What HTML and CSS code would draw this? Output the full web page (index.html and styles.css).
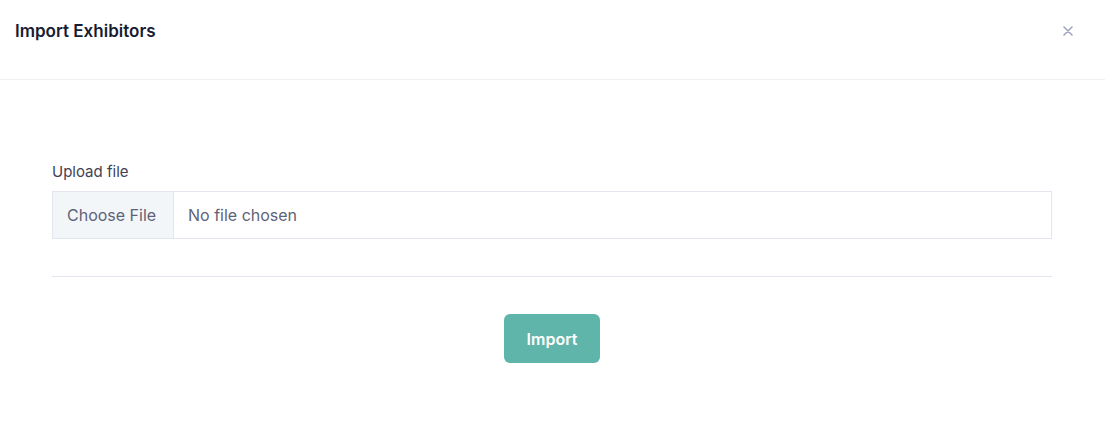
FILE: index.html
```html
<!DOCTYPE html>
<html>
<head>
<meta charset="utf-8">
<link rel="stylesheet" href="styles.css">
</head>
<body>
<div class="modal">
  <div class="modal-header">
    <h5 class="modal-title">Import Exhibitors</h5>
    <button class="close" type="button" aria-label="Close">
      <svg width="10" height="10" viewBox="0 0 10 10"><path d="M1 1L9 9M9 1L1 9" stroke="#a1a5c0" stroke-width="1.6" stroke-linecap="round"/></svg>
    </button>
  </div>
  <div class="modal-body">
    <label class="form-label">Upload file</label>
    <div class="file-input">
      <span class="file-btn">Choose File</span>
      <span class="file-name">No file chosen</span>
    </div>
    <hr class="divider">
    <div class="actions">
      <button class="btn-import" type="button">Import</button>
    </div>
  </div>
</div>
</body>
</html>
```
FILE: styles.css
```css
* { box-sizing: border-box; }
html, body { margin: 0; padding: 0; background: #fff; }
body { font-family: Inter, "Noto Sans", sans-serif; color: #181c32; }
.modal { width: 1105px; }
.modal-header {
  height: 80px;
  display: flex;
  align-items: center;
  justify-content: space-between;
  padding: 0 32px 17px 15px;
  border-bottom: 1px solid #eff2f5;
}
.modal-title { margin: 0; font-size: 17px; font-weight: 600; color: #181c32; }
.close { border: 0; background: transparent; padding: 0; display: flex; cursor: pointer; }
.modal-body { padding: 83px 53px 0 52px; }
.form-label { display: block; font-size: 15px; font-weight: 400; color: #3f4254; line-height: 17px; margin-bottom: 11px; }
.file-input {
  display: flex;
  height: 48px;
  border: 1px solid #e4e6ef;
  font-size: 16px;
  color: #5e6278;
}
.file-btn {
  display: flex; align-items: center;
  padding: 0 14px;
  background: #f3f6f9;
  border-right: 1px solid #e4e6ef;
  width: 121px;
  color: #5e6278;
}
.file-name { display: flex; align-items: center; padding-left: 14px; color: #5e6278; }
.divider { border: 0; border-top: 1px solid #e4e6ef; margin: 37px 0 0; }
.actions { display: flex; justify-content: center; padding-top: 37px; }
.btn-import {
  width: 96px; height: 49px;
  border: 0; border-radius: 6px;
  background: #5fb5aa; color: #fff;
  font-family: inherit; font-size: 16px; font-weight: 600;
}
```
